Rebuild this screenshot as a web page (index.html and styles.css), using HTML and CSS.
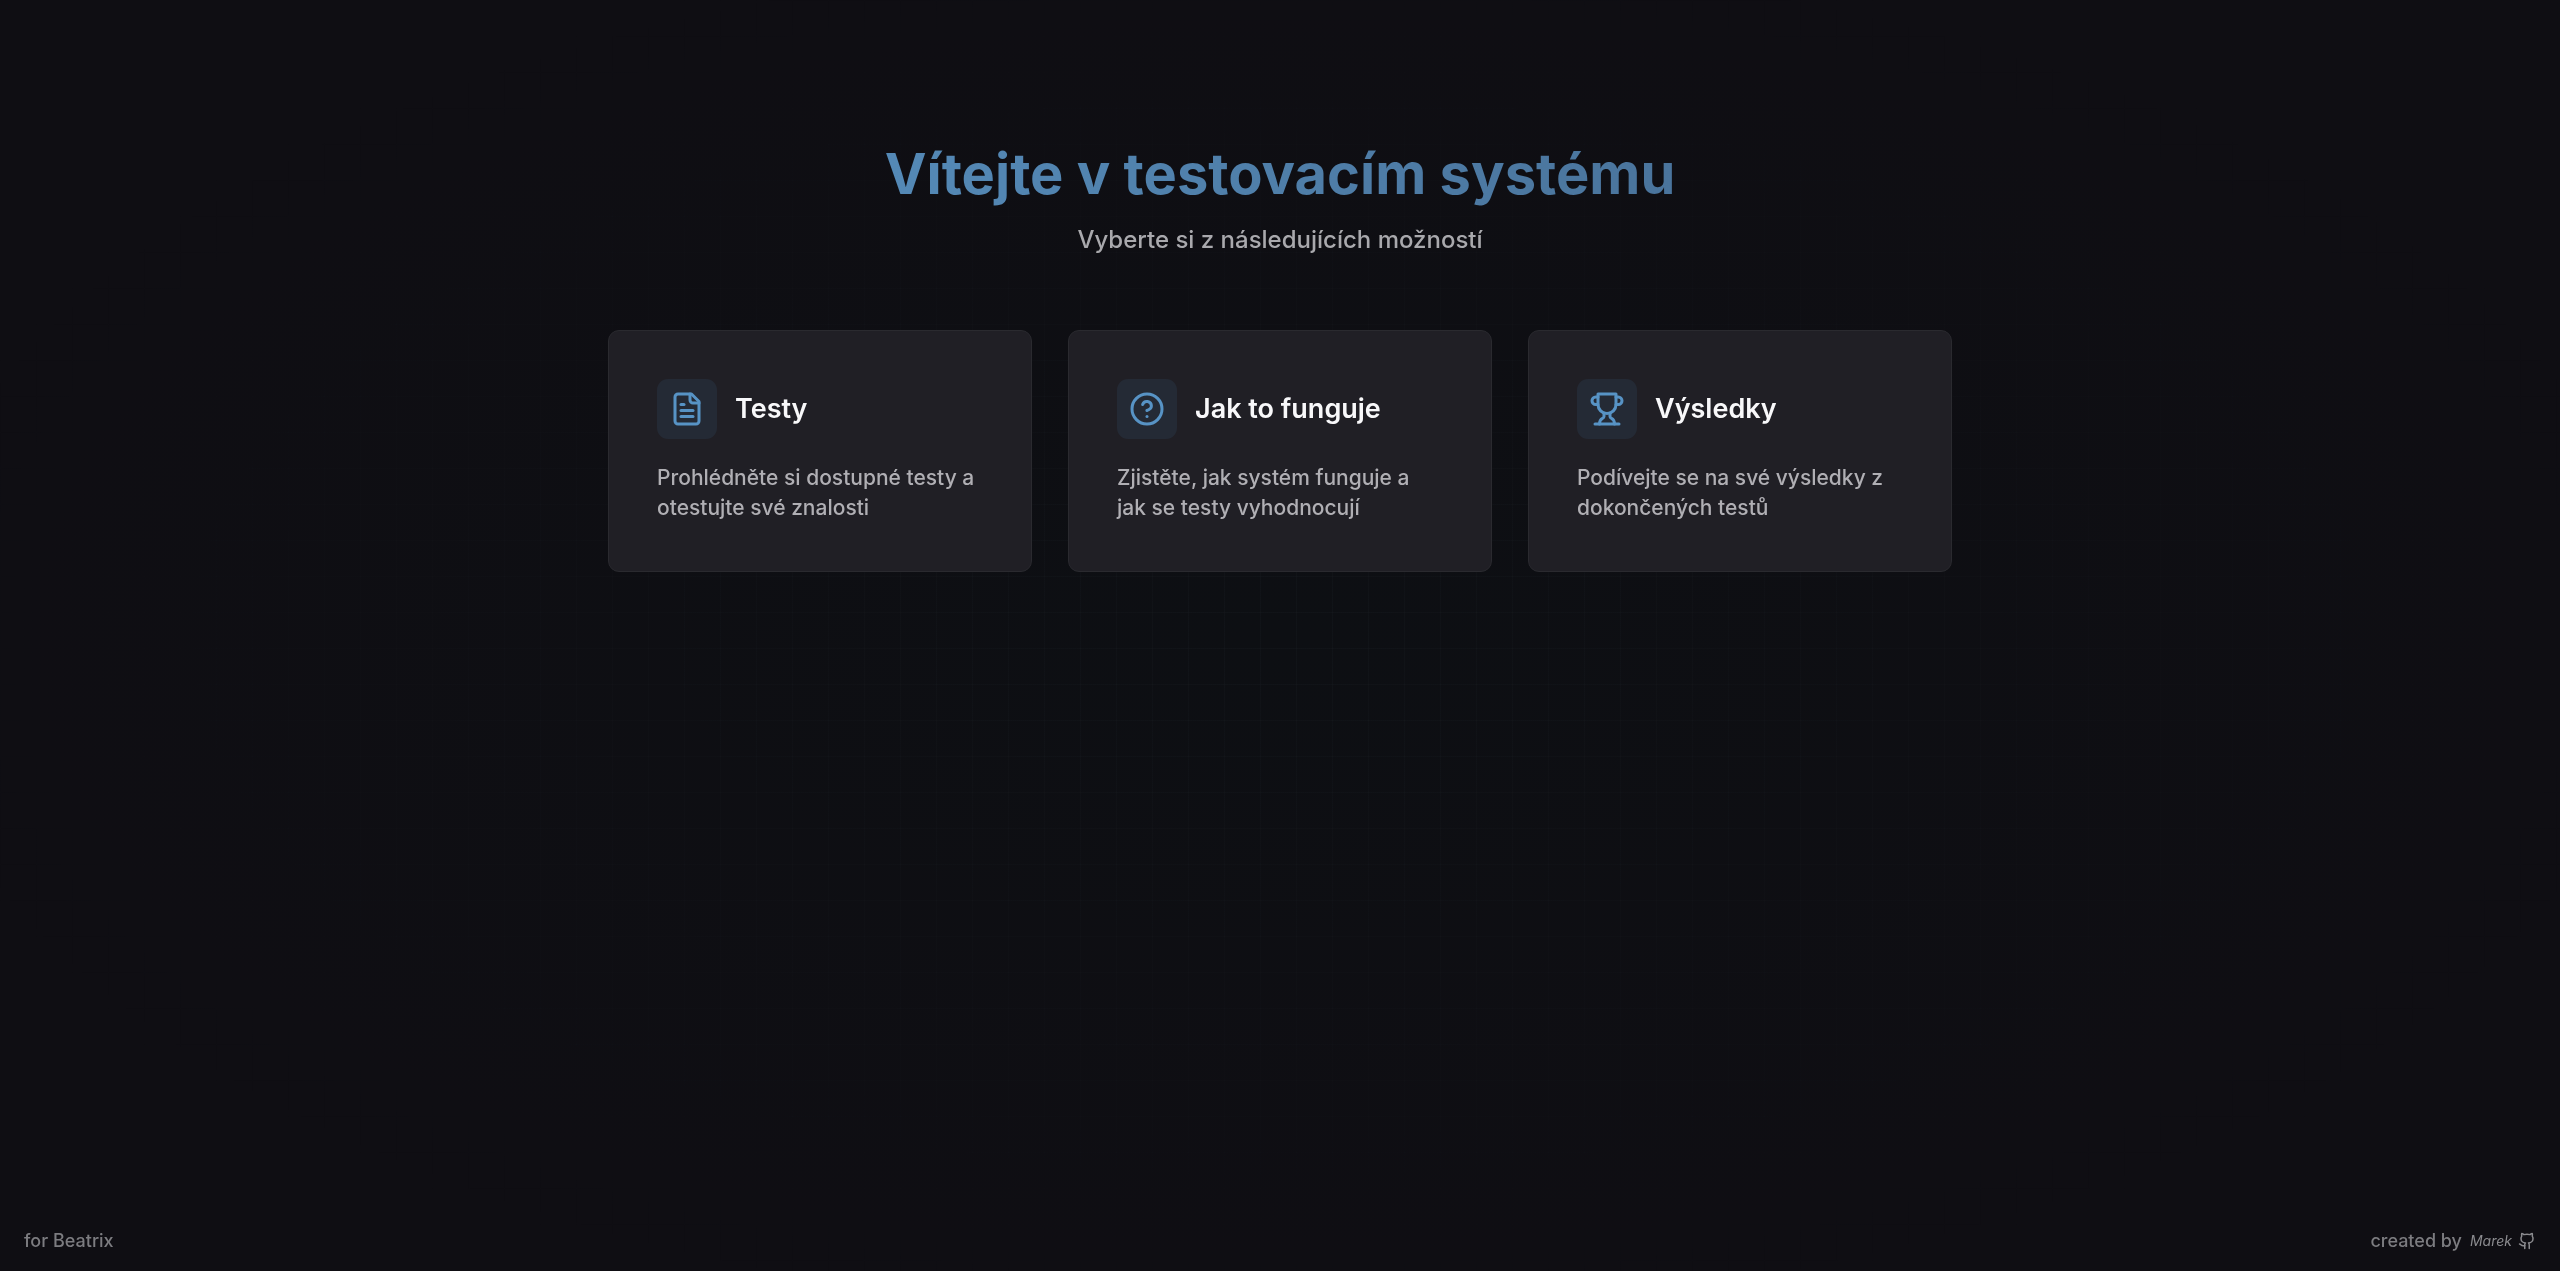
FILE: index.html
```html
<!DOCTYPE html>
<html lang="cs">
<head>
  <meta charset="UTF-8">
  <meta name="viewport" content="width=device-width, initial-scale=1.0">
  <title>Testovací systém</title>
  <link rel="stylesheet" href="styles.css">
</head>
<body>

<main>
  <header class="hero">
    <h1>Vítejte v testovacím systému</h1>
    <p>Vyberte si z následujících možností</p>
  </header>

  <nav class="cards">
    <a class="card" href="#testy">
      <div class="card-head">
        <span class="icon">
          <svg viewBox="0 0 24 24"><path d="M15 2H6a2 2 0 0 0-2 2v16a2 2 0 0 0 2 2h12a2 2 0 0 0 2-2V7Z"/><path d="M14 2v4a2 2 0 0 0 2 2h4"/><path d="M10 9H8"/><path d="M16 13H8"/><path d="M16 17H8"/></svg>
        </span>
        <h2>Testy</h2>
      </div>
      <p>Prohlédněte si dostupné testy a otestujte své znalosti</p>
    </a>
    <a class="card" href="#jak-to-funguje">
      <div class="card-head">
        <span class="icon">
          <svg viewBox="0 0 24 24"><circle cx="12" cy="12" r="10"/><path d="M9.09 9a3 3 0 0 1 5.83 1c0 2-3 3-3 3"/><path d="M12 17h.01"/></svg>
        </span>
        <h2>Jak to funguje</h2>
      </div>
      <p>Zjistěte, jak systém funguje a jak&nbsp;se testy vyhodnocují</p>
    </a>
    <a class="card" href="#vysledky">
      <div class="card-head">
        <span class="icon">
          <svg viewBox="0 0 24 24"><path d="M6 9H4.500a2.500 2.500 0 0 1 0-5H6"/><path d="M18 9h1.500a2.500 2.500 0 0 0 0-5H18"/><path d="M4 22h16"/><path d="M10 14.660V17c0 .55-.47.98-.97 1.210C7.850 18.750 7 20.240 7 22"/><path d="M14 14.660V17c0 .55.47.98.97 1.210C16.150 18.750 17 20.240 17 22"/><path d="M18 2H6v7a6 6 0 0 0 12 0V2Z"/></svg>
        </span>
        <h2>Výsledky</h2>
      </div>
      <p>Podívejte se na své výsledky z dokončených testů</p>
    </a>
  </nav>
</main>

<footer>
  <span>for Beatrix</span>
  <span class="author">created by
    <a href="#github"><em>Marek</em>
      <svg viewBox="0 0 24 24"><path d="M15 22v-4a4.800 4.800 0 0 0-1-3.500c3 0 6-2 6-5.500.08-1.250-.27-2.480-1-3.500.28-1.150.28-2.350 0-3.500 0 0-1 0-3 1.500-2.640-.5-5.360-.5-8 0C6 2 5 2 5 2c-.3 1.150-.3 2.350 0 3.500A5.403 5.403 0 0 0 4 9c0 3.500 3 5.500 6 5.500-.39.49-.68 1.050-.85 1.650-.17.6-.22 1.230-.15 1.850v4"/><path d="M9 18c-4.510 2-5-2-7-2"/></svg>
    </a>
  </span>
</footer>

</body>
</html>
```
FILE: styles.css
```css
* { box-sizing: border-box; }
body {
  display: flex;
  flex-direction: column;
  min-height: 100vh;
  margin: 0;
  background: radial-gradient(ellipse at center, #0d0f13, #0f0e13 70%);
  color: #f8f8fa;
  font-family: Inter, "Open Sans", sans-serif;
  font-weight: 500;
}
/* faint grid, strongest in the middle of the window */
body::before {
  content: "";
  position: fixed;
  inset: 0;
  z-index: -1;
  background-image:
    linear-gradient(to right, rgba(120, 140, 150, 0.04) 1px, transparent 1px),
    linear-gradient(to bottom, rgba(120, 140, 150, 0.04) 1px, transparent 1px);
  background-size: 36px 36px;
  -webkit-mask-image: radial-gradient(ellipse at center, black, transparent 80%);
  mask-image: radial-gradient(ellipse at center, black, transparent 80%);
}
h1, h2, p { margin: 0; }
a { color: inherit; text-decoration: none; }
main { flex: 1; width: 100%; max-width: 1344px; margin: 0 auto; padding-top: 138px; }
.hero { text-align: center; }
.hero h1 {
  width: fit-content;
  margin: 0 auto;
  background: linear-gradient(to right, #5489b6, #4a749c);
  -webkit-background-clip: text;
  background-clip: text;
  color: transparent;
  font-size: 56px;
  line-height: 72px;
  font-weight: 700;
}
.hero p { margin-top: 12px; color: #a9a9ad; font-size: 24px; line-height: 36px; }
.cards { display: grid; grid-template-columns: repeat(auto-fit, minmax(320px, 1fr)); gap: 36px; margin-top: 72px; }
.card { padding: 48px; border: 1px solid #2a2a2f; border-radius: 11px; background-color: #201f25; }
.card-head { display: flex; align-items: center; gap: 18px; margin-bottom: 24px; }
.icon { display: grid; place-items: center; width: 60px; height: 60px; border-radius: 11px; background-color: #242a35; }
svg { fill: none; stroke: currentColor; stroke-width: 2; stroke-linecap: round; stroke-linejoin: round; }
.icon svg { width: 40px; height: 40px; padding: 2px; color: #5793c5; }
.card h2 { font-size: 27px; line-height: 36px; font-weight: 600; }
.card p { color: #b0afb4; font-size: 21px; line-height: 30px; }
footer { display: flex; justify-content: space-between; padding: 18px 24px; color: #7c7c80; font-size: 18px; line-height: 24px; }
.author, .author a { display: flex; align-items: center; gap: 8px; }
.author a { gap: 6px; color: #8b8b8f; font-size: 14px; font-weight: 400; }
.author svg { width: 18px; height: 18px; }
```
